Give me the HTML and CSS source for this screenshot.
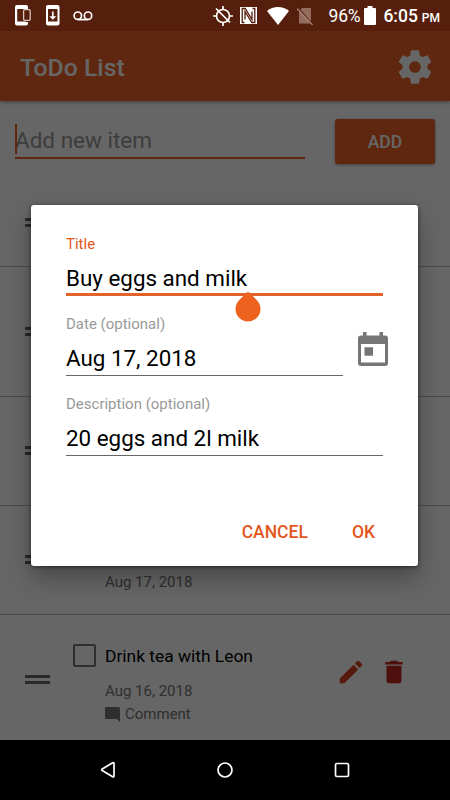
FILE: index.html
```
<!DOCTYPE html>
<html lang="en">
<head>
	<meta charset="utf-8">
	<title>ToDo List</title>
	<meta name="viewport" content="width=device-width, initial-scale=1.0">
	<link rel="stylesheet" href="styles.css">
</head>
<body>

	<div class="app">

		<div class="status">
			<div class="status-left">
				<svg width="17" height="21" viewBox="0 0 17 21"><path fill="#fff" fill-rule="evenodd" d="M2 0h9a2 2 0 0 1 2 2v2h-2.500V4H2.200v12.500h8.300V17H13v1.500a2 2 0 0 1-2 2H2a2 2 0 0 1-2-2V2a2 2 0 0 1 2-2z"/><rect x="8.600" y="4.700" width="6.600" height="10.600" rx="1" fill="#561f0d" stroke="#d9c3bb" stroke-width="1.300"/></svg>
				<svg class="download" width="14" height="21" viewBox="0 0 14 21"><path fill="#fff" fill-rule="evenodd" d="M2 0h9.500a2 2 0 0 1 2 2v16.500a2 2 0 0 1-2 2H2a2 2 0 0 1-2-2V2a2 2 0 0 1 2-2zM2 4v12.500h9.500V4zM6 6.500h1.600v4.700h2.700L6.800 14.700l-3.500-3.500H6z"/></svg>
				<svg class="voicemail" width="20" height="10" viewBox="0 0 20 10"><g fill="none" stroke="#fff" stroke-width="1.700"><circle cx="4.800" cy="4.700" r="3.700"/><circle cx="15" cy="4.700" r="3.700"/><path d="M4.800 8.600H15"/></g></svg>
			</div>
			<div class="status-right">
				<svg class="gps" width="20" height="20" viewBox="0 0 20 20"><g fill="none" stroke="#fff" stroke-width="1.700"><circle cx="10" cy="10" r="6.500"/><path d="M10 0v3.500M10 16.500V20M0 10h3.500M16.500 10H20M3 2.500l14 14"/></g></svg>
				<svg class="nfc" width="17" height="17" viewBox="0 0 17 17"><path fill="#fff" d="M0 0h17v17H0z"/><path fill="none" stroke="#561f0d" stroke-width="1.300" d="M4.500 15.500H2.200v-14h3L12 12.500V4.500M12.500 1.500h2.300v14h-3L5 4.500v8"/></svg>
				<svg class="wifi" width="22" height="18" viewBox="0 0 22 18"><path fill="#fff" d="M11 18 0 4C6-1.300 16-1.300 22 4z"/></svg>
				<svg class="nosim" width="16" height="18" viewBox="0 0 16 18"><path fill="#946d5f" d="M5 1h8.500q.5 0 .5.500v15H2V4z"/><path stroke="#561f0d" stroke-width="1.500" d="M1 1l15 17"/><path stroke="#a98679" stroke-width="1.200" d="M0 1.500l15.500 16.500"/></svg>
				<span class="percent">96%</span>
				<svg class="battery" width="12" height="19" viewBox="0 0 12 19"><path fill="#fff" d="M3.500 0h5v2H11q1 0 1 1v15q0 1-1 1H1q-1 0-1-1V3q0-1 1-1h2.500z"/></svg>
				<span class="time">6:05</span>
				<span class="pm">PM</span>
			</div>
		</div>

		<div class="appbar">
			<h1>ToDo List</h1>
			<svg width="40" height="40" viewBox="0 0 24 24"><path fill="#fff" d="M19.430 12.980c.04-.32.07-.64.07-.98s-.03-.66-.07-.98l2.110-1.650c.19-.15.24-.42.12-.64l-2-3.460c-.12-.22-.39-.3-.61-.22l-2.490 1c-.52-.4-1.080-.73-1.690-.98l-.38-2.650C14.460 2.180 14.250 2 14 2h-4c-.25 0-.46.18-.49.420l-.38 2.650c-.61.25-1.170.59-1.690.98l-2.490-1c-.23-.09-.49 0-.61.220l-2 3.460c-.13.220-.07.49.120.640l2.110 1.650c-.04.320-.07.650-.07.980s.03.660.07.980l-2.110 1.650c-.19.150-.24.420-.12.640l2 3.460c.12.220.39.300.61.220l2.490-1c.52.400 1.080.730 1.690.980l.38 2.650c.03.240.24.420.49.420h4c.25 0 .46-.18.49-.42l.38-2.650c.61-.25 1.170-.59 1.690-.98l2.490 1c.23.090.49 0 .61-.22l2-3.460c.12-.22.07-.49-.12-.64l-2.110-1.650zM12 15.500c-1.930 0-3.500-1.570-3.500-3.500s1.570-3.500 3.500-3.500 3.500 1.570 3.500 3.500-1.570 3.500-3.500 3.500z"/></svg>
		</div>

		<div class="content">
			<div class="new-item">
				<div class="new-input">Add new item</div>
				<button class="add">ADD</button>
			</div>

			<div class="item first">
				<div class="handle"></div>
			</div>
			<div class="item tall">
				<div class="handle"></div>
			</div>
			<div class="item">
				<div class="handle"></div>
			</div>
			<div class="item">
				<div class="handle"></div>
				<div class="text">
					<div class="name"></div>
					<div class="date">Aug 17, 2018</div>
				</div>
			</div>
			<div class="item tall">
				<div class="handle"></div>
				<div class="check"></div>
				<div class="text">
					<div class="name">Drink tea with Leon</div>
					<div class="date">Aug 16, 2018</div>
					<div class="comment">
						<svg width="15" height="15" viewBox="2 2 20 20"><path fill="#757575" d="M21.990 4c0-1.100-.89-2-1.990-2H4c-1.100 0-2 .9-2 2v12c0 1.100.9 2 2 2h14l4 4-.01-18z"/></svg>
						<span>Comment</span>
					</div>
				</div>
				<div class="actions">
					<svg width="30" height="30" viewBox="0 0 24 24"><path fill="#d8431f" d="M3 17.250V21h3.750L17.810 9.940l-3.750-3.750L3 17.250zM20.710 7.040c.39-.39.39-1.020 0-1.410l-2.340-2.340c-.39-.39-1.020-.39-1.410 0l-1.830 1.830 3.750 3.750 1.830-1.830z"/></svg>
					<svg width="30" height="30" viewBox="0 0 24 24"><path fill="#c22a20" d="M6 19c0 1.100.9 2 2 2h8c1.100 0 2-.9 2-2V7H6v12zM19 4h-3.500l-1-1h-5l-1 1H5v2h14V4z"/></svg>
				</div>
			</div>
		</div>

		<div class="nav">
			<svg width="16" height="18" viewBox="0 0 16 18"><path fill="none" stroke="#fff" stroke-width="1.700" stroke-linejoin="round" d="M12.700 1.700 2.200 7.900q-1.200.8 0 1.600l10.500 6.200q1.300.5 1.300-.8V2.500q0-1.300-1.300-.8z"/></svg>
			<svg width="16" height="16" viewBox="0 0 16 16"><circle cx="8" cy="8" r="7" fill="none" stroke="#fff" stroke-width="1.700"/></svg>
			<svg width="16" height="16" viewBox="0 0 16 16"><rect x="1.500" y="1.500" width="13" height="13" rx="1.500" fill="none" stroke="#fff" stroke-width="1.700"/></svg>
		</div>

		<div class="dialog-bg">
			<div class="dialog">
				<div class="field active">
					<label>Title</label>
					<div class="value">Buy eggs and milk
						<svg class="cursor" width="26" height="30" viewBox="0 0 26 30"><path fill="#ee6220" d="M13 0q1 0 1.800 1l6.900 7A12.500 12.500 0 1 1 4.300 8l6.900-7Q12 0 13 0z"/></svg>
					</div>
				</div>
				<div class="date-row">
					<div class="field">
						<label>Date (optional)</label>
						<div class="value">Aug 17, 2018</div>
					</div>
					<svg width="30" height="34" viewBox="0 0 30 34"><path fill="#757575" fill-rule="evenodd" d="M5 0h3.500v3.500h13V0H25v3.500h2q3 0 3 3V31q0 3-3 3H3q-3 0-3-3V6.500q0-3 3-3h2zM3 12v18.500h24V12zM6.500 15.300H15v8.400H6.500z"/></svg>
				</div>
				<div class="field">
					<label>Description (optional)</label>
					<div class="value">20 eggs and 2l milk</div>
				</div>
				<div class="buttons">
					<button>CANCEL</button>
					<button>OK</button>
				</div>
			</div>
		</div>

	</div>

</body>
</html>
```
FILE: styles.css
```
*{
	box-sizing: border-box;
	font-family: Roboto, sans-serif;
}
body{
	margin: 0px;
}
svg{
	display: block;
	flex: none;
}
button{
	border: none;
	padding: 0px;
	background: none;
	font-size: 17.5px;
	font-weight: 500;
}

.app{
	position: relative;
	display: flex;
	flex-direction: column;
	width: 450px;
	height: 800px;
	overflow: hidden;
	background: white;
}

.status{
	display: flex;
	justify-content: space-between;
	height: 31px;
	padding: 5px 10px 0px 15px;
	background: #561f0d;
	color: white;
	position: relative;
	z-index: 2;
}
.status-left,.status-right{
	display: flex;
	align-items: center;
	height: 21px;
}
.download{
	margin-left: 14px;
}
.voicemail{
	margin-left: 13px;
}
.nfc{
	margin-left: 7px;
}
.wifi{
	margin-left: 10px;
}
.nosim{
	margin-left: 8px;
}
.percent{
	margin-left: 16px;
	font-size: 17.5px;
	letter-spacing: -0.2px;
}
.battery{
	margin-left: 4px;
}
.time{
	margin-left: 7px;
	font-size: 17.5px;
	font-weight: 500;
}
.pm{
	margin-left: 4px;
	padding-top: 4px;
	font-size: 12px;
	font-weight: 500;
}

.appbar{
	display: flex;
	justify-content: space-between;
	align-items: center;
	flex: none;
	height: 70px;
	padding: 2px 15px 0px 20px;
	background: #ee6226;
	box-shadow: 0px 1px 4px rgba(0,0,0,0.4);
	color: white;
}
.appbar h1{
	margin: 0px;
	font-size: 24.8px;
	font-weight: 500;
}

.content{
	height: 639px;
	overflow: hidden;
	padding-top: 18px;
}
.new-item{
	display: flex;
	justify-content: space-between;
	height: 61px;
	padding: 0px 15px;
}
.new-input{
	position: relative;
	width: 290px;
	height: 40px;
	border-bottom: 2px solid #ee6226;
	line-height: 43px;
	font-size: 22.5px;
	color: #999;
}
.new-input::before{
	content: "";
	position: absolute;
	left: 0px;
	top: 5px;
	width: 2px;
	height: 30px;
	background: #ee6226;
}
.add{
	width: 100px;
	height: 45px;
	border-radius: 3px;
	background: #ee6226;
	box-shadow: 0px 1px 3px rgba(0,0,0,0.4);
	color: white;
}

.item{
	display: flex;
	height: 109px;
	padding-left: 25px;
	border-bottom: 1px solid #bbb;
}
.item.first{
	height: 87px;
}
.item.tall{
	height: 130px;
}
.handle{
	align-self: center;
	width: 25px;
	height: 9px;
	border-top: 3px solid #666;
	border-bottom: 3px solid #666;
	margin-bottom: 1px;
}
.check{
	width: 23px;
	height: 23px;
	margin: 29px 9px 0px 23px;
	border: 2px solid #757575;
	border-radius: 2px;
}
.text{
	width: 233px;
	padding-top: 30px;
	font-size: 15px;
	color: #757575;
}
.handle + .text{
	margin-left: 55px;
}
.name{
	height: 23px;
	margin-bottom: 12px;
	line-height: 23px;
	font-size: 17.4px;
	color: black;
}
.date,.comment{
	height: 23px;
	line-height: 23px;
}
.comment{
	display: flex;
	align-items: center;
	gap: 5px;
}
.actions{
	display: flex;
	align-items: center;
	gap: 13px;
	padding-bottom: 15px;
	margin-left: -2px;
}

.nav{
	display: flex;
	justify-content: center;
	align-items: center;
	gap: 101px;
	flex: none;
	height: 60px;
	background: black;
	position: relative;
	z-index: 2;
}

/* dialog */
.dialog-bg{
	position: absolute;
	left: 0px;
	right: 0px;
	top: 31px;
	bottom: 60px;
	display: flex;
	justify-content: center;
	align-items: center;
	padding-right: 1px;
	background: rgba(0,0,0,0.6);
}
.dialog{
	width: 387px;
	height: 361px;
	padding: 28px 35px 0px;
	border-radius: 3px;
	background: white;
	box-shadow: 0px 12px 25px rgba(0,0,0,0.3), 0px 1px 4px rgba(0,0,0,0.5);
}
.field{
	height: 80px;
}
.field label{
	display: block;
	height: 20px;
	line-height: 22px;
	font-size: 15px;
	color: #999;
}
.value{
	position: relative;
	height: 43px;
	border-bottom: 1px solid #666;
	line-height: 51px;
	font-size: 22.4px;
	color: black;
}
.active label{
	color: #e2571c;
}
.active .value{
	line-height: 50px;
	border-bottom: 3px solid #e2632a;
}
.cursor{
	position: absolute;
	left: 169px;
	top: 39px;
}
.date-row{
	display: flex;
}
.date-row .field{
	flex: none;
	width: 277px;
	margin-right: 15px;
}
.date-row svg{
	margin-top: 19px;
}
.buttons{
	display: flex;
	justify-content: flex-end;
	gap: 44px;
	padding: 49px 8px 0px 0px;
}
.buttons button{
	color: #e2571c;
}
```
